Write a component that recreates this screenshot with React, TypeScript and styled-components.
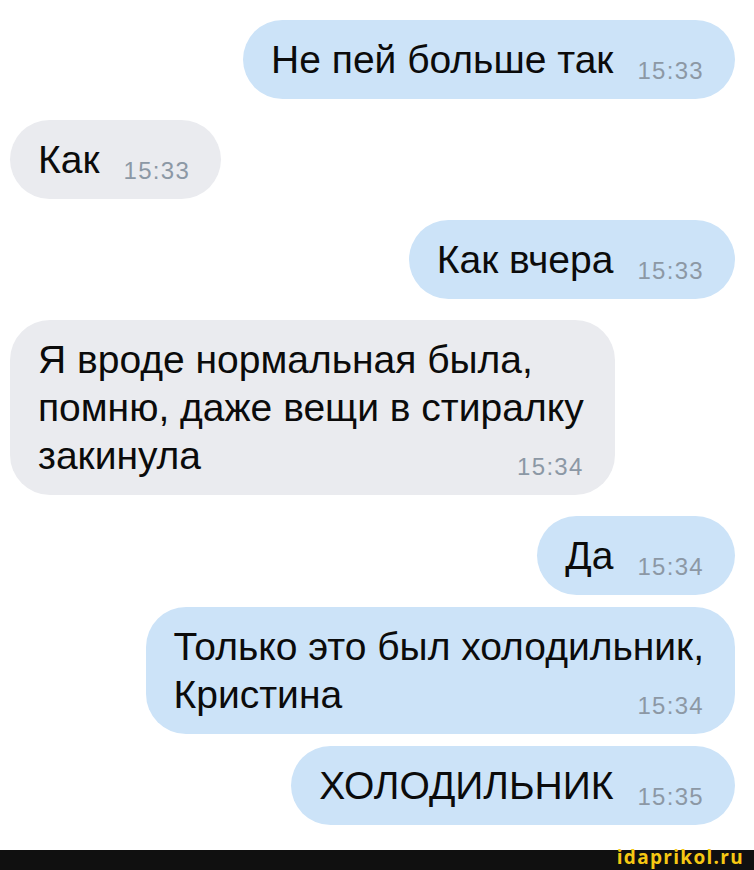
import React from 'react'
import styled, { createGlobalStyle } from 'styled-components'

const GlobalStyle = createGlobalStyle`
  html, body {
    margin: 0;
    padding: 0;
    background: #ffffff;
  }

  body {
    font-family: "Liberation Sans", Arial, sans-serif;
  }
`

const Page = styled.div`
  width: 754px;
  height: 870px;
  display: flex;
  flex-direction: column;
  overflow: hidden;
  background: #ffffff;
`

const Chat = styled.div`
  flex: 1;
  display: flex;
  flex-direction: column;
  padding: 20px 19px 0 10px;
`

const Row = styled.div<{ $out: boolean; $gap: number }>`
  display: flex;
  justify-content: ${({ $out }) => ($out ? 'flex-end' : 'flex-start')};
  margin-top: ${({ $gap }) => $gap}px;

  &:first-child {
    margin-top: 0;
  }
`

const Bubble = styled.div<{ $out: boolean }>`
  padding: 16px 31px 15px 28px;
  border-radius: 40px;
  background: ${({ $out }) => ($out ? '#cce3f8' : '#eaebef')};
  color: #0b0b0b;
  font-size: 39px;
  line-height: 48px;
  white-space: nowrap;
`

const Time = styled.span`
  float: right;
  margin: 22px 0 0 24px;
  font-size: 24px;
  line-height: 26px;
  letter-spacing: 1.3px;
  color: #8c98a5;
`

const Footer = styled.div`
  height: 20px;
  background: #101010;
  display: flex;
  justify-content: flex-end;
  align-items: flex-start;
  padding-right: 10px;
`

const Watermark = styled.span`
  font-family: "Open Sans", "DejaVu Sans", sans-serif;
  font-weight: 700;
  font-size: 19px;
  line-height: 20px;
  letter-spacing: 1.3px;
  margin-top: -3px;
  color: #f6c813;
`

type Message = {
  out: boolean
  lines: string[]
  time: string
}

const messages: Message[] = [
  { out: true, lines: ['Не пей больше так'], time: '15:33' },
  { out: false, lines: ['Как'], time: '15:33' },
  { out: true, lines: ['Как вчера'], time: '15:33' },
  {
    out: false,
    lines: ['Я вроде нормальная была,', 'помню, даже вещи в стиралку', 'закинула'],
    time: '15:34',
  },
  { out: true, lines: ['Да'], time: '15:34' },
  { out: true, lines: ['Только это был холодильник,', 'Кристина'], time: '15:34' },
  { out: true, lines: ['ХОЛОДИЛЬНИК'], time: '15:35' },
]

const App = () => (
  <>
    <GlobalStyle />
    <Page>
      <Chat>
        {messages.map((msg, i) => {
          const prev = messages[i - 1]
          const gap = prev && prev.out === msg.out ? 12 : 21

          return (
            <Row key={i} $out={msg.out} $gap={gap}>
              <Bubble $out={msg.out}>
                {msg.lines.map((line, j) => (
                  <React.Fragment key={j}>
                    {j > 0 && <br />}
                    {line}
                  </React.Fragment>
                ))}
                <Time>{msg.time}</Time>
              </Bubble>
            </Row>
          )
        })}
      </Chat>
      <Footer>
        <Watermark>idaprikol.ru</Watermark>
      </Footer>
    </Page>
  </>
)

export default App
